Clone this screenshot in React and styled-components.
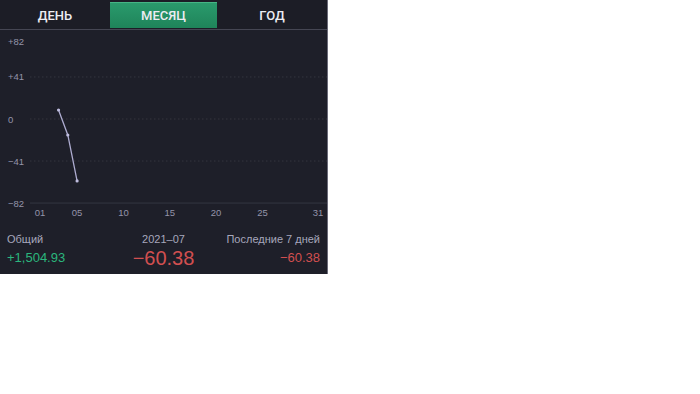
import React from "react";
import styled, { createGlobalStyle } from "styled-components";

const GlobalStyle = createGlobalStyle`
  body {
    margin: 0;
    background: #ffffff;
    font-family: "Liberation Sans", Arial, sans-serif;
  }
`;

const Panel = styled.div`
  width: 327px;
  height: 274px;
  background: #1e1f29;
  border-right: 1px solid #6a6a78;
  display: flex;
  flex-direction: column;
`;

const Tabs = styled.div`
  height: 29px;
  display: grid;
  grid-template-columns: 110px 107px 1fr;
  align-items: center;
  border-bottom: 1px solid #454653;
  background: #1c1d26;
`;

const Tab = styled.div`
  height: 25px;
  display: flex;
  align-items: center;
  justify-content: center;
  font-family: Roboto, "Liberation Sans", sans-serif;
  font-size: 13px;
  font-weight: 500;
  color: #ececf2;
  background: ${(p) => (p.$active ? "linear-gradient(#2a9a6c, #1f845a)" : "transparent")};
  border-top: 1px solid ${(p) => (p.$active ? "#46b585" : "transparent")};
`;

const Chart = styled.svg`
  display: block;
  width: 327px;
  height: 192px;
`;

const Footer = styled.div`
  flex: 1;
  display: grid;
  grid-template-columns: 1fr 1fr 1fr;
  padding: 10px 7px 0 7px;
`;

const Stat = styled.div`
  display: flex;
  flex-direction: column;
  align-items: ${(p) => p.$align};
`;

const Label = styled.div`
  font-size: 11px;
  color: #a7a7bc;
  line-height: 14px;
`;

const Value = styled.div`
  font-size: ${(p) => (p.$big ? "20px" : "13px")};
  line-height: ${(p) => (p.$big ? "22px" : "17px")};
  margin-top: ${(p) => (p.$big ? "1px" : "3px")};
  color: ${(p) => (p.$up ? "#2bb67d" : "#d24f50")};
`;

const dayX = (d) => 40 + (d - 1) * 9.27;
const valY = (v) => 89 - v * 1.025;

const data = [
  [3, 8.8],
  [4, -15.6],
  [5, -60.38],
];

function MonthChart() {
  const yTicks = [
    { label: "+82", y: 11, line: null },
    { label: "+41", y: valY(41), line: "dot" },
    { label: "0", y: valY(0), line: "dot" },
    { label: "\u221241", y: valY(-41), line: "dot" },
    { label: "\u221282", y: valY(-82), line: "solid" },
  ];
  const xTicks = [1, 5, 10, 15, 20, 25, 31];
  const pts = data.map(([d, v]) => `${dayX(d)},${valY(v)}`).join(" ");
  return (
    <Chart viewBox="0 0 327 192">
      {yTicks.map((t) => (
        <g key={t.label}>
          <text
            x="8"
            y={t.y + 3.5}
            fontSize="9.5"
            fill="#9494aa"
            fontFamily="Liberation Sans, Arial, sans-serif"
          >
            {t.label}
          </text>
          {t.line && (
            <line
              x1="30"
              x2="327"
              y1={t.y}
              y2={t.y}
              stroke={t.line === "solid" ? "#343542" : "#34353f"}
              strokeWidth="1"
              strokeDasharray={t.line === "dot" ? "1.5 2.5" : undefined}
            />
          )}
        </g>
      ))}
      {xTicks.map((d) => (
        <text
          key={d}
          x={dayX(d)}
          y="186"
          fontSize="9.5"
          textAnchor="middle"
          fill="#9494aa"
          fontFamily="Liberation Sans, Arial, sans-serif"
        >
          {String(d).padStart(2, "0")}
        </text>
      ))}
      <polyline points={pts} fill="none" stroke="#aeacd0" strokeWidth="1.3" />
      {data.map(([d, v]) => (
        <circle key={d} cx={dayX(d)} cy={valY(v)} r="1.6" fill="#bebcde" />
      ))}
    </Chart>
  );
}

export default function App() {
  return (
    <>
      <GlobalStyle />
      <Panel>
        <Tabs>
          <Tab>ДЕНЬ</Tab>
          <Tab $active>МЕСЯЦ</Tab>
          <Tab>ГОД</Tab>
        </Tabs>
        <MonthChart />
        <Footer>
          <Stat $align="flex-start">
            <Label>Общий</Label>
            <Value $up>+1,504.93</Value>
          </Stat>
          <Stat $align="center">
            <Label>2021–07</Label>
            <Value $big>−60.38</Value>
          </Stat>
          <Stat $align="flex-end">
            <Label>Последние 7 дней</Label>
            <Value>−60.38</Value>
          </Stat>
        </Footer>
      </Panel>
    </>
  );
}
